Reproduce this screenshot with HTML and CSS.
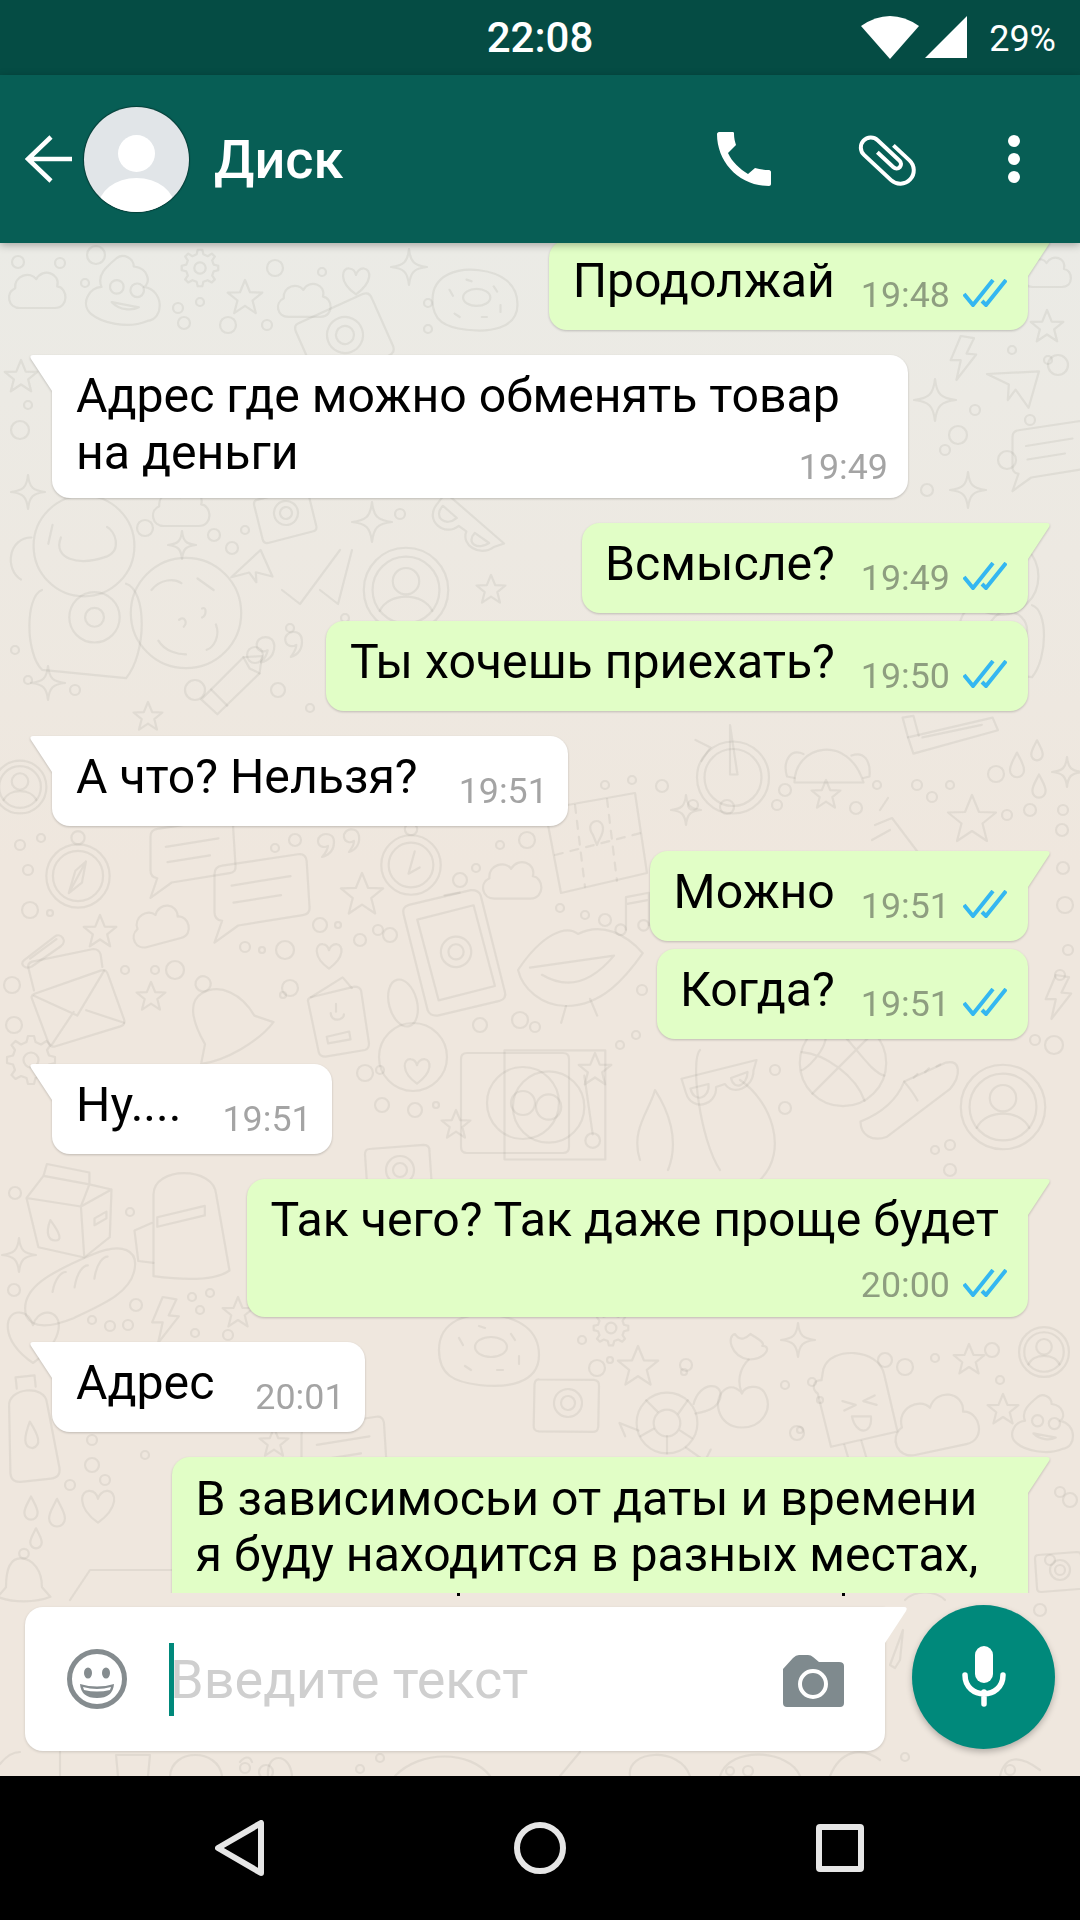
FILE: index.html
```html
<!DOCTYPE html>
<html lang="ru">
<head>
  <meta charset="UTF-8">
  <title>Диск</title>
  <meta name="viewport" content="width=device-width, initial-scale=1.0">
  <link rel="stylesheet" href="styles.css">
</head>
<body>
  <div class="phone">
    <!-- Status bar -->
    <div class="status-bar">
      <span></span>
      <span class="clock">22:08</span>
      <div class="status-right">
        <svg class="wifi" width="58" height="43" viewBox="0 0 58 43"><path d="M29 43L0 10Q29 -10 58 10Z"/></svg>
        <svg class="signal" width="42" height="42" viewBox="0 0 42 42"><path d="M0 42L42 0V42Z"/></svg>
        <span class="battery">29%</span>
      </div>
    </div>

    <!-- Header -->
    <header class="app-bar">
      <svg class="back" width="47" height="48" viewBox="0 0 47 48"><path d="M47 24H3M26 2L3 24L26 46"/></svg>
      <div class="avatar">
        <span class="avatar-head"></span>
        <span class="avatar-body"></span>
      </div>
      <h1 class="contact">Диск</h1>
      <div class="actions">
        <svg width="54" height="54" viewBox="0 0 54 54"><path d="M2 0H16C17 0 17 1 17 2C17 6 18 10 19 13L11 21C15 30 23 37 31 42L38 36C42 37 47 38 52 38C53 38 54 39 54 40V52C54 53 53 54 52 54C22 54 0 30 0 2C0 1 1 0 2 0Z"/></svg>
        <svg class="clip" width="61" height="56" viewBox="-30.5 -28 61 56"><g transform="rotate(43)"><path d="M-5 -14H17A13.5 13.5 0 0 1 17 13H-20A10 10 0 0 1 -20 -7H10A4.5 4.5 0 0 1 10 2H-12"/></g></svg>
        <div class="dots"><i></i><i></i><i></i></div>
      </div>
    </header>

    <main class="chat">
      <!-- Wallpaper doodles -->
      <svg class="wallpaper" width="1080" height="1533" viewBox="0 243 1080 1533">
        <defs>
          <path id="star" d="M0-50L14-16L48-15L21 7L30 42L0 22L-30 42L-21 7L-48-15L-14-16Z"/>
          <path id="sparkle" d="M0-50C4-14 14-4 50 0C14 4 4 14 0 50C-4 14-14 4-50 0C-14-4-4-14 0-50Z"/>
          <path id="cloud" d="M-30 30C-50 30-55 5-38-3C-40-25-12-32-3-18C8-38 38-28 32-6C50-4 52 30 28 30Z"/>
          <path id="heart" d="M0 40C-50 5-40-35-18-32C-8-31-2-22 0-14C2-22 10-33 22-32C42-30 48 5 0 40Z"/>
          <path id="drop" d="M0-45C12-20 22-8 22 10A22 22 0 0 1-22 10C-22-8-12-20 0-45Z"/>
          <path id="bolt" d="M-5-50L25-45L8-10L30-8L-15 50L-5 5L-28 5Z"/>
          <path id="plane" d="M-50-25L50-30L30 40L5 5L-10 25L-8-5Z"/>
          <g id="gear"><circle r="15"/><path d="M-9-36L-6-48H6L9-36L20-31L31-38L39-30L32-20L36-9L48-6V6L36 9L32 20L39 30L31 38L20 32L9 36L6 48H-6L-9 36L-20 32L-31 38L-39 30L-32 20L-36 9L-48 6V-6L-36-9L-32-20L-39-30L-31-38L-20-31Z"/></g>
          <g id="chat"><path d="M-50-24Q-50-32-42-33L38-45Q46-46 47-38L50 10Q51 18 43 19L-25 30L-50 48L-42 25Q-50 24-50 16Z"/><path d="M-32-12L30-22M-30 6L20-2"/></g>
          <g id="person"><circle r="48"/><circle r="38"/><circle cy="-10" r="15"/><path d="M-30 24C-20 2 20 2 30 24"/></g>
          <g id="donut"><path d="M-50 0C-50-30-20-38 5-35C30-32 50-20 50 5C50 35 15 38-10 35C-35 32-50 25-50 0Z"/><ellipse cx="2" cy="-3" rx="16" ry="10"/><path d="M-30-12L-26-5M-10-24L-4-22M22-16L26-10M30 6L30 14M-24 16L-18 20M8 20L14 20"/></g>
          <g id="clock"><circle r="48"/><circle r="36"/><path d="M6-22L-4 14L14 4"/><circle cy="-58" r="10"/></g>
          <g id="compass"><circle r="48"/><circle r="38"/><path d="M12-22L-14 26L-4-8ZM-4-8L-14 26L6 10L12-22"/><circle cy="-58" r="10"/></g>
          <g id="envelope"><path d="M-50-10L24-36Q30-38 32-32L50 18Q52 24 46 26L-26 48Q-32 50-34 44L-52-4Q-54-8-50-10Z"/><path d="M-50-8L-2 14L28-36M-30 46L-6 10M8 8L50 22"/><path d="M-50-14L-56-38Q-58-44-52-46L16-60Q22-60 24-54L26-40"/></g>
          <g id="phone"><path d="M-46-50L20-62Q28-62 30-56L50 46Q52 54 44 56L-22 68Q-30 68-32 62L-52-40Q-54-48-46-50Z"/><path d="M-38-34L22-46L40 40L-20 52Z"/><circle cx="1" cy="2" r="16"/><circle cx="1" cy="2" r="8"/><path d="M-8-58L8-60"/></g>
          <g id="passport"><path d="M-38-30L28-46Q36-46 38-40L50 40Q50 48 44 50L-16 60Q-24 60-26 54L-42-22Q-44-28-38-30Z"/><path d="M-38-30L10-60L24-44M-14 30L20 22L22 34L-12 40ZM-8-6C-8 8 12 6 12-4M0-20V-8"/></g>
          <g id="milk"><path d="M-50-20L14-10L18 50L-36 38ZM14-10L50-30L48 26L18 50M-50-20L-30-46L24-36L14-10M-30-46L-26-60L24-50L24-36L50-30"/><path d="M-22 6C-10 22 -8 30-16 30C-24 30-28 22-22 6"/><path d="M30 4L44-4L44 4L30 12Z"/></g>
          <g id="pack"><path d="M-30-30C-30-60 34-60 36-30L50 50Q30 64-30 56Z"/><path d="M-32 0L-50 8L-46 40L-30 42M-26-6L24-18V-8L-26 4Z"/></g>
          <g id="bread"><path d="M-48 30C-55 5-25-10 10-25C40-38 55-30 50-10C45 10 20 20-5 32C-25 40-42 42-48 30Z"/><path d="M-24 8C-22-4-16-10-12-10M-4 4C-2-10 4-16 8-16M14-4C16-18 22-24 26-24"/></g>
          <g id="glasses"><path d="M-50-15L50-40L46-26C46-2 18 8 8-8L-4-4C-2 20-36 30-44 4Z"/><path d="M-38-2L-14-8C-12 12-34 18-38-2ZM16-16L38-24C38-6 20 2 16-16Z"/></g>
          <g id="ball"><circle r="48"/><path d="M-46-12C-20-10 14 14 24 42M-14-46C14-20 30 10 46 14M-34 34L34-34M-24-42C-8-26-36 4-46 8"/></g>
          <g id="shoe"><path d="M-50 30C-30 22-12 8-4-12L40-32C56-36 56-18 44-4L-22 46C-38 52-50 44-50 30Z"/><path d="M-4-12C4-2 6 0 10 8M6-16L10-20M18-22L22-26M30-28L34-30"/></g>
          <g id="map"><path d="M-50-34L40-50L52 30L-34 50Z"/><path d="M-40 12L46-10M-20-38L-10 44M12-44L22 38" stroke-dasharray="8 8"/><path d="M-2-8C-12-22 8-28 8-14C8-8 4-4 2 2Z"/></g>
          <g id="taco"><path d="M-46 30C-46-20 26-36 46 30Z"/><path d="M-34-8C-52-16-62 2-56 22L-46 24M30-6C46-12 56 0 54 22L46 24"/></g>
          <g id="wheel"><circle cy="10" r="48"/><circle cy="10" r="38"/><path d="M-4-60L6 6L-4 6ZM-50-40L-30-30L-42-12"/></g>
          <g id="ruler"><path d="M-50-14L44-36L50-22L-44 4Z"/><path d="M-34-14L32-28M-50-14L-56-36L-44-38L-38-16"/></g>
          <g id="turtle"><circle r="32"/><circle r="14"/><path d="M-10-12L-22-24M12-10L22-24M-14 6L-28 14M14 8L26 16M0 14V32M28-20C34-44 60-44 56-26C52-14 40-12 30-10M-30 8L-50 0L-44 14M20 26L40 40L46 28"/></g>
          <g id="plant"><path d="M-6 50C-36 50-42 14-24 4C-16 0-8 6-6 10C-2 0 14 0 20 8C32 28 18 50-6 50ZM-6 10C-14-10-4-24 2-30"/><path d="M2-30C-20-34-24-58-14-60C-8-50 0-56 4-60C10-56 22-50 18-46C30-46 22-30 2-30Z"/></g>
          <g id="ice"><path d="M-28-36C-20-60 30-58 36-30L50 30L-20 46L-34-10C-40-14-40-24-30-24Z"/><path d="M-6 44L0 64M12 40L18 60M-8-2L6 2L-6 8M26-8L14-2L28 2M2 14H22C24 34 6 34 2 14Z"/></g>
          <g id="lips"><path d="M-50 0C-30-30-10-38 0-30C20-40 40-30 54-14C40 6 20 30-10 30C-30 30-46 16-50 0Z"/><path d="M-40-2L30-12M-30 4C-10 16 10 12 30-12M-10 30L-14 44M10 24L16 38"/></g>
          <g id="astro"><circle cy="-42" r="48"/><path d="M-22-50C-30-30-6-22 22-32C36-38 30-56 22-60M-30-62L-34-44"/><path d="M-50-50C-72-50-76-20-60-10M-40 0C-56 6-56 60-40 76L40 84C60 60 60 0 40-6"/><circle cx="10" cy="26" r="24"/><circle cx="10" cy="26" r="9"/></g>
          <g id="cookie"><circle r="48"/><path d="M-30-20C-22-30-10-30-4-26M10-30L24-20M-24 24C-18 34-6 36 0 36M26 10C30 20 24 30 18 32M-6 6C-2 2 2 8-2 12M14-4C18-6 18 2 14 4"/></g>
          <g id="pencil"><path d="M-48 20L20-48L50-50L46-22L-22 44Z"/><path d="M20-48L30-30L46-22M-32 4L-6 30"/></g>
          <g id="quote"><path d="M-14-2C-14-24-46-22-46-4C-46 8-34 10-26 6C-28 16-32 22-38 28C-24 24-14 14-14-2ZM36-14C34-34 4-30 6-12C8 0 20 0 26-4C26 6 20 12 16 18C30 14 38 2 36-14Z"/></g>
          <g id="photo"><path d="M-44-30L34-36Q42-36 42-28L46 30Q46 38 38 38L-38 44Q-46 44-46 36L-50-22Q-50-30-44-30Z"/><circle r="20"/><circle r="10"/></g>
          <g id="clipdoodle"><path d="M-48 28L22-26C36-36 52-16 36-4L-30 42C-46 50-58 36-48 28ZM-34 24L26-20"/></g>
          <g id="note"><path d="M-16 38V-36L36-46V28M-16-20L36-30"/><circle cx="-28" cy="38" r="12"/><circle cx="24" cy="28" r="12"/></g>
          <g id="vinyl"><path d="M-50-50H46Q52-50 52-44V44Q52 50 46 50H-50Q-56 50-56 44V-44Q-56-50-50-50Z"/><circle cx="6" r="36"/><circle cx="6" r="12"/></g>
          <g id="poop"><path d="M-12-40C-4-46 8-40 8-30C26-28 28-10 20-6C44-2 44 32 24 34C0 44-30 36-42 26C-56 14-44-6-30-6C-36-20-24-30-12-40Z"/><circle cx="-12" cy="-6" r="8"/><circle cx="12" cy="-2" r="8"/><path d="M-18 12C-8 22 6 22 14 18Z"/></g>
          <g id="bell"><path d="M-6-36C16-36 30-14 30 12L44 28C20 38-20 38-44 28L-30 12C-30-14-24-36-6-36Z"/><circle cy="-44" r="8"/></g>
          <g id="bottle"><path d="M-20-30C-20-50 20-50 20-30L26 40Q26 50 16 50H-16Q-26 50-26 40ZM-10-48V-60H10V-48"/><path d="M0-12C8 4 10 14 0 16C-10 14-8 4 0-12Z"/></g>
          <g id="turntable"><path d="M-50-54H46V50H-50Z"/><circle cx="-8" r="34"/><circle cx="-8" r="12"/><path d="M26-30L34 26"/><circle cx="34" cy="32" r="7"/></g>
        </defs>

        <use href="#cloud" transform="translate(38 290) scale(.6)"/>
        <use href="#poop" transform="translate(127 292) scale(.85)"/>
        <use href="#gear" transform="translate(200 268) scale(.38)"/>
        <use href="#star" transform="translate(245 298) scale(.36)"/>
        <use href="#cloud" transform="translate(305 300) scale(.56)"/>
        <use href="#heart" transform="translate(356 280) scale(.36)"/>
        <use href="#sparkle" transform="translate(409 267) scale(.36)"/>
        <use href="#donut" transform="translate(475 300) scale(.85)"/>
        <use href="#photo" transform="translate(345 335) scale(.9) rotate(-20)"/>
        <use href="#sparkle" transform="translate(1000 272) scale(.3)"/>
        <use href="#star" transform="translate(1047 327) scale(.34)"/>
        <use href="#cloud" transform="translate(1048 272) scale(.5)"/>

        <use href="#star" transform="translate(21 377) scale(.34)"/>
        <use href="#sparkle" transform="translate(28 492) scale(.34)"/>
        <use href="#astro" transform="translate(84 590) scale(1.05)"/>
        <use href="#cookie" transform="translate(186 613) scale(1.15)"/>
        <use href="#cloud" transform="translate(182 508) scale(.6)"/>
        <use href="#photo" transform="translate(286 513) scale(.6) rotate(-10)"/>
        <use href="#sparkle" transform="translate(372 522) scale(.4)"/>
        <use href="#sparkle" transform="translate(182 545) scale(.28)"/>
        <use href="#plane" transform="translate(253 572) scale(.4) rotate(-40)"/>
        <path d="M282 590L300 604L340 550M320 590L338 604L352 550"/>
        <use href="#person" transform="translate(406 590) scale(.88)"/>
        <use href="#glasses" transform="translate(458 530) scale(.75) rotate(55)"/>
        <use href="#star" transform="translate(491 590) scale(.3)"/>
        <use href="#bolt" transform="translate(963 358) scale(.44)"/>
        <use href="#plane" transform="translate(1013 387) scale(.52)"/>
        <use href="#sparkle" transform="translate(935 400) scale(.42)"/>
        <use href="#sparkle" transform="translate(968 490) scale(.36)"/>
        <use href="#chat" transform="translate(1050 455) scale(.75)"/>
        <use href="#astro" transform="translate(1000 610) scale(.8)"/>
        <use href="#pencil" transform="translate(231 687) scale(.62)"/>
        <use href="#quote" transform="translate(282 647) scale(.55)"/>
        <use href="#sparkle" transform="translate(48 683) scale(.34)"/>
        <use href="#star" transform="translate(148 717) scale(.3)"/>

        <use href="#person" transform="translate(20 787) scale(.55)"/>
        <use href="#compass" transform="translate(78 876) scale(.66)"/>
        <use href="#chat" transform="translate(193 857) scale(.85)"/>
        <use href="#chat" transform="translate(262 897) scale(.95)"/>
        <use href="#quote" transform="translate(341 843) scale(.5)"/>
        <use href="#clock" transform="translate(411 865) scale(.62)"/>
        <use href="#cloud" transform="translate(513 880) scale(.62)"/>
        <use href="#star" transform="translate(362 895) scale(.44)"/>
        <use href="#star" transform="translate(100 932) scale(.34)"/>
        <use href="#cloud" transform="translate(160 925) scale(.6) rotate(-15)"/>
        <use href="#phone" transform="translate(455 950) scale(.95) rotate(-3)"/>
        <use href="#clipdoodle" transform="translate(45 948) scale(.44)"/>
        <use href="#heart" transform="translate(329 955) scale(.34)"/>
        <use href="#envelope" transform="translate(79 1003) scale(.9)"/>
        <use href="#star" transform="translate(151 997) scale(.3)"/>
        <use href="#bell" transform="translate(224 1020) scale(.95) rotate(-30)"/>
        <use href="#passport" transform="translate(336 1017) scale(.66)"/>
        <ellipse cx="403" cy="1003" rx="14" ry="24" transform="rotate(-15 403 1003)"/>
        <circle cx="413" cy="1057" r="34"/>
        <use href="#heart" transform="translate(417 1070) scale(.34)"/>
        <use href="#vinyl" transform="translate(517 1103) scale(1)"/>
        <use href="#gear" transform="translate(31 1060) scale(.5)"/>
        <use href="#star" transform="translate(456 1125) scale(.3)"/>
        <use href="#photo" transform="translate(400 1170) scale(.7)"/>
        <use href="#wheel" transform="translate(733 770) scale(.75)"/>
        <use href="#taco" transform="translate(829 760) scale(.75)"/>
        <use href="#ruler" transform="translate(953 750) scale(.9)"/>
        <use href="#drop" transform="translate(1017 767) scale(.32)"/>
        <use href="#drop" transform="translate(1037 752) scale(.26)"/>
        <use href="#drop" transform="translate(1039 788) scale(.3)"/>
        <use href="#sparkle" transform="translate(1067 772) scale(.3)"/>
        <use href="#map" transform="translate(595 843) scale(1)"/>
        <use href="#star" transform="translate(826 795) scale(.3)"/>
        <use href="#star" transform="translate(972 820) scale(.5)"/>
        <use href="#sparkle" transform="translate(686 810) scale(.3)"/>
        <path d="M875 825L892 818L920 855M880 810L888 798M890 830L872 840"/>
        <use href="#note" transform="translate(633 913) scale(.44)"/>
        <use href="#lips" transform="translate(578 970) scale(1.2)"/>
        <use href="#bolt" transform="translate(1058 997) scale(.44)"/>
        <use href="#turntable" transform="translate(557 1107) scale(1.05)"/>
        <use href="#star" transform="translate(595 1070) scale(.34)"/>
        <use href="#glasses" transform="translate(719 1090) scale(.75)"/>
        <use href="#ball" transform="translate(843 1063) scale(.9)"/>
        <use href="#shoe" transform="translate(908 1093) scale(.95)"/>
        <use href="#person" transform="translate(1003 1107) scale(.88)"/>
        <path d="M640 1160C630 1130 650 1110 655 1090C668 1110 680 1140 668 1170M720 1170C700 1140 690 1060 700 1050M760 1180C790 1150 770 1100 740 1080"/>

        <use href="#milk" transform="translate(69 1215) scale(.85)"/>
        <use href="#pack" transform="translate(182 1223) scale(.95)"/>
        <use href="#sparkle" transform="translate(19 1255) scale(.34)"/>
        <use href="#bread" transform="translate(79 1283) scale(1.1)"/>
        <use href="#bolt" transform="translate(165 1320) scale(.46)"/>
        <use href="#star" transform="translate(238 1313) scale(.32)"/>
        <use href="#heart" transform="translate(33 1335) scale(.7)"/>
        <use href="#bottle" transform="translate(31 1433) scale(.95) rotate(-6)"/>
        <use href="#heart" transform="translate(98 1505) scale(.44)"/>
        <use href="#drop" transform="translate(31 1510) scale(.3)"/>
        <use href="#drop" transform="translate(57 1515) scale(.36)"/>
        <use href="#drop" transform="translate(36 1540) scale(.26)"/>
        <use href="#bell" transform="translate(24 1580) scale(.6)"/>
        <path d="M70 1600L90 1570H250"/>
        <use href="#star" transform="translate(274 1443) scale(.3)"/>
        <use href="#chat" transform="translate(344 1455) scale(.85)"/>
        <use href="#donut" transform="translate(489 1350) scale(1)"/>
        <use href="#gear" transform="translate(611 1328) scale(.36)"/>
        <use href="#star" transform="translate(638 1367) scale(.42)"/>
        <use href="#plant" transform="translate(747 1385) scale(.85)"/>
        <use href="#sparkle" transform="translate(798 1340) scale(.34)"/>
        <use href="#ice" transform="translate(850 1403) scale(.95)"/>
        <use href="#photo" transform="translate(568 1403) scale(.7) rotate(5)"/>
        <use href="#turtle" transform="translate(667 1423) scale(.95)"/>
        <use href="#person" transform="translate(1044 1352) scale(.52)"/>
        <use href="#cloud" transform="translate(936 1423) scale(.9) rotate(-12)"/>
        <use href="#star" transform="translate(1003 1410) scale(.32)"/>
        <use href="#poop" transform="translate(1046 1425) scale(.7)"/>
        <use href="#star" transform="translate(969 1360) scale(.32)"/>
        <use href="#photo" transform="translate(1060 1570) scale(.5)"/>

        <!-- scattered dots -->
        <circle cx="18" cy="262" r="6"/><circle cx="60" cy="263" r="5"/><circle cx="96" cy="255" r="9"/><circle cx="85" cy="283" r="4"/><circle cx="178" cy="308" r="5"/><circle cx="200" cy="302" r="4"/><circle cx="184" cy="323" r="6"/><circle cx="228" cy="325" r="8"/><circle cx="267" cy="325" r="5"/><circle cx="275" cy="268" r="8"/><circle cx="322" cy="272" r="4"/><circle cx="428" cy="303" r="4"/><circle cx="428" cy="329" r="4"/>
        <circle cx="20" cy="430" r="9"/><circle cx="28" cy="405" r="4"/><circle cx="145" cy="528" r="8"/><circle cx="214" cy="535" r="6"/><circle cx="232" cy="548" r="6"/><circle cx="245" cy="530" r="4"/><circle cx="290" cy="628" r="4"/><circle cx="345" cy="618" r="4"/><circle cx="255" cy="655" r="8"/><circle cx="195" cy="690" r="10"/><circle cx="278" cy="690" r="7"/><circle cx="310" cy="708" r="4"/><circle cx="75" cy="690" r="5"/><circle cx="28" cy="680" r="4"/><circle cx="15" cy="650" r="4"/><circle cx="400" cy="514" r="5"/><circle cx="927" cy="490" r="6"/><circle cx="945" cy="450" r="5"/><circle cx="958" cy="435" r="9"/><circle cx="975" cy="410" r="5"/><circle cx="1007" cy="460" r="9"/><circle cx="1030" cy="420" r="5"/><circle cx="1058" cy="365" r="10"/><circle cx="1012" cy="350" r="4"/><circle cx="1048" cy="360" r="4"/>
        <circle cx="20" cy="845" r="5"/><circle cx="41" cy="838" r="4"/><circle cx="28" cy="870" r="5"/><circle cx="30" cy="910" r="8"/><circle cx="50" cy="913" r="3"/><circle cx="275" cy="848" r="4"/><circle cx="295" cy="840" r="6"/><circle cx="500" cy="845" r="4"/><circle cx="527" cy="840" r="8"/><circle cx="460" cy="880" r="7"/><circle cx="476" cy="868" r="4"/><circle cx="320" cy="925" r="7"/><circle cx="338" cy="925" r="3"/><circle cx="360" cy="940" r="6"/><circle cx="378" cy="930" r="5"/><circle cx="390" cy="935" r="7"/><circle cx="285" cy="950" r="9"/><circle cx="245" cy="947" r="5"/><circle cx="262" cy="950" r="3"/><circle cx="175" cy="970" r="9"/><circle cx="155" cy="970" r="4"/><circle cx="125" cy="970" r="4"/><circle cx="12" cy="985" r="8"/><circle cx="14" cy="1025" r="8"/><circle cx="290" cy="988" r="8"/><circle cx="283" cy="995" r="3"/><circle cx="520" cy="1020" r="8"/><circle cx="535" cy="1027" r="5"/><circle cx="480" cy="1025" r="7"/><circle cx="380" cy="1070" r="4"/><circle cx="365" cy="1073" r="8"/><circle cx="415" cy="1110" r="7"/><circle cx="436" cy="1105" r="3"/><circle cx="382" cy="1105" r="7"/>
        <circle cx="605" cy="785" r="4"/><circle cx="632" cy="780" r="4"/><circle cx="662" cy="786" r="6"/><circle cx="693" cy="805" r="5"/><circle cx="727" cy="807" r="7"/><circle cx="785" cy="790" r="6"/><circle cx="777" cy="805" r="5"/><circle cx="856" cy="808" r="6"/><circle cx="877" cy="785" r="4"/><circle cx="917" cy="785" r="5"/><circle cx="932" cy="797" r="5"/><circle cx="950" cy="785" r="4"/><circle cx="996" cy="774" r="8"/><circle cx="1007" cy="815" r="5"/><circle cx="1030" cy="810" r="6"/><circle cx="1063" cy="810" r="5"/><circle cx="1062" cy="830" r="6"/><circle cx="1063" cy="868" r="6"/><circle cx="1065" cy="905" r="8"/><circle cx="1068" cy="950" r="5"/><circle cx="1060" cy="975" r="5"/><circle cx="1054" cy="1045" r="9"/><circle cx="560" cy="908" r="4"/><circle cx="585" cy="915" r="4"/><circle cx="605" cy="920" r="6"/><circle cx="642" cy="990" r="5"/><circle cx="620" cy="1045" r="4"/><circle cx="636" cy="1035" r="4"/><circle cx="775" cy="1070" r="5"/><circle cx="785" cy="1108" r="6"/><circle cx="1035" cy="1040" r="5"/><circle cx="935" cy="1150" r="4"/><circle cx="950" cy="1145" r="5"/><circle cx="950" cy="1170" r="6"/>
        <circle cx="15" cy="1193" r="6"/><circle cx="14" cy="1290" r="6"/><circle cx="130" cy="1212" r="4"/><circle cx="136" cy="1305" r="6"/><circle cx="192" cy="1297" r="4"/><circle cx="210" cy="1293" r="4"/><circle cx="200" cy="1310" r="4"/><circle cx="92" cy="1320" r="4"/><circle cx="110" cy="1326" r="5"/><circle cx="128" cy="1325" r="5"/><circle cx="195" cy="1333" r="4"/><circle cx="228" cy="1335" r="5"/><circle cx="92" cy="1440" r="5"/><circle cx="92" cy="1465" r="7"/><circle cx="70" cy="1485" r="5"/><circle cx="105" cy="1480" r="5"/><circle cx="145" cy="1455" r="4"/>
        <circle cx="582" cy="1340" r="4"/><circle cx="597" cy="1368" r="8"/><circle cx="610" cy="1360" r="3"/><circle cx="686" cy="1365" r="6"/><circle cx="684" cy="1372" r="3"/><circle cx="785" cy="1385" r="4"/><circle cx="812" cy="1382" r="4"/><circle cx="820" cy="1400" r="3"/><circle cx="800" cy="1430" r="3"/><circle cx="797" cy="1433" r="7"/><circle cx="885" cy="1360" r="7"/><circle cx="905" cy="1367" r="8"/><circle cx="935" cy="1358" r="4"/><circle cx="1000" cy="1380" r="4"/><circle cx="992" cy="1350" r="7"/><circle cx="1060" cy="1492" r="5"/><circle cx="1070" cy="1500" r="7"/><circle cx="1050" cy="1560" r="5"/><circle cx="1040" cy="1610" r="6"/>

        <!-- strip under the input -->
        <path d="M0 1764C8 1754 14 1752 20 1752M60 1776V1752M118 1776L116 1755H150L148 1776M170 1776C172 1748 218 1748 222 1776M240 1762C245 1756 250 1756 252 1762M268 1776C266 1752 290 1752 292 1776M395 1776C420 1750 470 1750 490 1776M560 1776L580 1752M630 1776C626 1750 680 1746 690 1776M720 1776C730 1745 790 1750 800 1776M830 1776C840 1752 860 1745 880 1760M1000 1776C1005 1755 1020 1755 1040 1770"/>
        <circle cx="245" cy="1768" r="5"/><circle cx="266" cy="1772" r="7"/><circle cx="360" cy="1769" r="4"/><circle cx="730" cy="1771" r="4"/><circle cx="748" cy="1771" r="5"/><circle cx="905" cy="1757" r="4"/><circle cx="1010" cy="1770" r="5"/><circle cx="380" cy="1758" r="4"/>
        <path d="M903 1630L900 1660L895 1668L890 1665ZM905 1600C915 1590 935 1590 945 1600"/>
      </svg>

      <div class="messages">
        <div class="msg out tail first">
          <span class="text">Продолжай</span>
          <span class="meta"><span class="time">19:48</span><svg class="ticks" width="44" height="28" viewBox="0 0 44 28"><path d="M1 15L10 26L30 1M19 22L23 26L43 1"/></svg></span>
        </div>
        <div class="msg in tail stack two-lines wide">
          <span class="text">Адрес где можно обменять товар<br>на деньги</span>
          <span class="meta"><span class="time">19:49</span></span>
        </div>
        <div class="msg out tail">
          <span class="text">Всмысле?</span>
          <span class="meta"><span class="time">19:49</span><svg class="ticks" width="44" height="28" viewBox="0 0 44 28"><path d="M1 15L10 26L30 1M19 22L23 26L43 1"/></svg></span>
        </div>
        <div class="msg out">
          <span class="text">Ты хочешь приехать?</span>
          <span class="meta"><span class="time">19:50</span><svg class="ticks" width="44" height="28" viewBox="0 0 44 28"><path d="M1 15L10 26L30 1M19 22L23 26L43 1"/></svg></span>
        </div>
        <div class="msg in tail">
          <span class="text">А что? Нельзя?</span>
          <span class="meta"><span class="time">19:51</span></span>
        </div>
        <div class="msg out tail">
          <span class="text">Можно</span>
          <span class="meta"><span class="time">19:51</span><svg class="ticks" width="44" height="28" viewBox="0 0 44 28"><path d="M1 15L10 26L30 1M19 22L23 26L43 1"/></svg></span>
        </div>
        <div class="msg out">
          <span class="text">Когда?</span>
          <span class="meta"><span class="time">19:51</span><svg class="ticks" width="44" height="28" viewBox="0 0 44 28"><path d="M1 15L10 26L30 1M19 22L23 26L43 1"/></svg></span>
        </div>
        <div class="msg in tail">
          <span class="text">Ну....</span>
          <span class="meta"><span class="time">19:51</span></span>
        </div>
        <div class="msg out tail stack mid">
          <span class="text">Так чего? Так даже проще будет</span>
          <span class="meta"><span class="time">20:00</span><svg class="ticks" width="44" height="28" viewBox="0 0 44 28"><path d="M1 15L10 26L30 1M19 22L23 26L43 1"/></svg></span>
        </div>
        <div class="msg in tail">
          <span class="text">Адрес</span>
          <span class="meta"><span class="time">20:01</span></span>
        </div>
        <div class="msg out tail stack long wide">
          <span class="text">В зависимосьи от даты и времени<br>я буду находится в разных местах,</span>
        </div>
      </div>

      <!-- Input row -->
      <div class="composer-row">
        <!-- tops of the next, cut off line of text -->
        <i class="cut-mark left"></i>
        <i class="cut-mark right"></i>
        <div class="composer">
          <svg class="smile" width="60" height="60" viewBox="0 0 60 60">
            <circle cx="30" cy="30" r="27.5" fill="none" stroke="#858c8f" stroke-width="5"/>
            <ellipse cx="21" cy="24" rx="4" ry="5.5" fill="#858c8f"/>
            <ellipse cx="39" cy="24" rx="4" ry="5.5" fill="#858c8f"/>
            <path d="M13 35Q30 40 47 35Q46 49 30 49Q14 49 13 35Z" fill="#858c8f"/>
            <path d="M16 38Q30 42 44 38L43 41Q30 44 17 41Z" fill="#fff"/>
          </svg>
          <span class="caret"></span>
          <span class="placeholder">Введите текст</span>
          <svg class="camera" width="61" height="52" viewBox="0 0 61 52">
            <path d="M0 14L10 3Q13 0 16 0H25Q28 0 30 2L36 7H56Q61 7 61 11V48Q61 52 57 52H4Q0 52 0 48Z" fill="#7f8a8e"/>
            <circle cx="30" cy="29" r="13" fill="none" stroke="#fff" stroke-width="4"/>
          </svg>
        </div>
        <div class="fab">
          <svg width="44" height="62" viewBox="0 0 44 62">
            <rect x="13" y="0" width="18" height="37" rx="9" fill="#fff"/>
            <path d="M3 29C3 54 41 54 41 29M22 46V58" fill="none" stroke="#fff" stroke-width="5.5" stroke-linecap="round"/>
          </svg>
        </div>
      </div>
    </main>

    <!-- Navigation bar -->
    <nav class="nav-bar">
      <svg width="49" height="56" viewBox="0 0 49 56"><path d="M46 3V53L3 28Z"/></svg>
      <svg width="52" height="52" viewBox="0 0 52 52"><circle cx="26" cy="26" r="23"/></svg>
      <svg width="48" height="48" viewBox="0 0 48 48"><rect x="3" y="3" width="42" height="42" rx="1"/></svg>
    </nav>
  </div>
</body>
</html>
```

FILE: styles.css
```css
/* Colours taken from the screenshot */
:root {
  --status: #054c44;
  --bar: #075e55;
  --accent: #00897b;
  --out: #e1fec6;
  --in: #ffffff;
  --tick: #34b7f1;
}

* {
  margin: 0;
  padding: 0;
  box-sizing: border-box;
}

body {
  background: #000;
  font-family: Roboto, "Noto Sans", sans-serif;
  color: #000;
}

.phone {
  width: 1080px;
  height: 1920px;
  display: flex;
  flex-direction: column;
  overflow: hidden;
}

/* Status bar */
.status-bar {
  flex: 0 0 75px;
  background: var(--status);
  color: #fff;
  display: grid;
  grid-template-columns: 1fr auto 1fr;
  align-items: center;
}
.clock {
  font-size: 42px;
  font-weight: 500;
  margin-top: -1px;
}
.status-right {
  display: flex;
  align-items: flex-start;
  justify-content: flex-end;
  padding-right: 24px;
  height: 75px;
}
.status-right svg {
  fill: #fff;
  margin-top: 16px;
}
.signal {
  margin-left: 6px;
}
.battery {
  font-size: 36px;
  margin-left: 22px;
  line-height: 78px;
}

/* Top bar */
.app-bar {
  flex: 0 0 168px;
  background: var(--bar);
  color: #fff;
  display: flex;
  align-items: center;
  padding-left: 25px;
  position: relative;
  z-index: 2;
  box-shadow: 0 2px 8px rgba(0, 0, 0, 0.3);
}
.back {
  fill: none;
  stroke: #fff;
  stroke-width: 4.5;
}
.avatar {
  position: relative;
  width: 105px;
  height: 105px;
  margin-left: 12px;
  border-radius: 50%;
  overflow: hidden;
  background: #e1e5e8;
  box-shadow: 0 0 1px 1px rgba(0, 0, 0, 0.35);
  flex-shrink: 0;
}
.avatar-head {
  position: absolute;
  left: 34px;
  top: 28px;
  width: 37px;
  height: 37px;
  border-radius: 50%;
  background: #fff;
}
.avatar-body {
  position: absolute;
  left: 14px;
  top: 71px;
  width: 77px;
  height: 60px;
  border-radius: 50%;
  background: #fff;
}
.contact {
  font-size: 54px;
  font-weight: 500;
  margin-left: 25px;
}
.actions {
  display: flex;
  align-items: center;
  margin-left: auto;
  padding-right: 60px;
  fill: #fff;
}
.clip {
  margin-left: 86px;
  fill: none;
  stroke: #fff;
  stroke-width: 4;
  overflow: visible;
}
.dots {
  margin-left: 90px;
  display: flex;
  flex-direction: column;
  gap: 6px;
}
.dots i {
  display: block;
  width: 12px;
  height: 12px;
  border-radius: 50%;
  background: #fff;
}

/* Chat area */
.chat {
  flex: 0 0 1533px;
  position: relative;
  background: linear-gradient(#ebebe6 0, #efe7de 620px);
  display: flex;
  flex-direction: column;
}
.wallpaper {
  position: absolute;
  left: 0;
  top: 0;
  fill: none;
  stroke: rgba(110, 110, 95, 0.1);
  stroke-width: 2.2;
  stroke-linejoin: round;
  stroke-linecap: round;
}
.wallpaper defs * {
  vector-effect: non-scaling-stroke;
}

.messages {
  flex: 0 0 1350px;
  position: relative;
  overflow: hidden;
  display: flex;
  flex-direction: column;
}

.msg {
  position: relative;
  flex-shrink: 0;
  display: flex;
  height: 90px;
  margin-top: 8px;
  border-radius: 18px;
  filter: drop-shadow(0 1.5px 1px rgba(0, 0, 0, 0.2));
}
.msg.tail {
  margin-top: 25px;
}
.msg.first {
  margin-top: -3px;
}
.msg.out {
  align-self: flex-end;
  margin-right: 52px;
  background: var(--out);
  padding: 0 21px 0 23.5px;
}
.msg.in {
  align-self: flex-start;
  margin-left: 52px;
  background: var(--in);
  padding: 0 20px 0 24px;
}
.msg.out.tail {
  border-top-right-radius: 0;
}
.msg.in.tail {
  border-top-left-radius: 0;
}
.msg.tail::after {
  content: "";
  position: absolute;
  top: 0;
  width: 22px;
  height: 36px;
  background: inherit;
}
.msg.out.tail::after {
  left: 100%;
  clip-path: path("M0 0H19Q23 0 21 4L0 36Z");
}
.msg.in.tail::after {
  right: 100%;
  clip-path: path("M22 0H3Q-1 0 1 4L22 36Z");
}

.text {
  font-size: 48.2px;
  line-height: 56px;
  padding-top: 13px;
  white-space: nowrap;
}
.meta {
  display: flex;
  align-items: flex-start;
  margin-left: 26px;
  padding-top: 35px;
}
.in .meta {
  margin-left: 41px;
}
.time {
  font-size: 35.8px;
  line-height: 40px;
}
.out .time {
  color: #8e9e80;
}
.in .time {
  color: #a4a4a4;
}
.ticks {
  margin-left: 13px;
  margin-top: 4px;
  fill: none;
  stroke: var(--tick);
  stroke-width: 4;
}

/* Bubbles where the time sits under the text */
.msg.stack {
  flex-direction: column;
  height: 138px;
}
.stack .meta {
  align-self: flex-end;
  margin-left: 0;
  padding-top: 17px;
}
.msg.wide {
  width: 856px;
}
.msg.mid {
  width: 781px;
}
.msg.two-lines {
  height: 143px;
}
.two-lines .text {
  padding-top: 12px;
  line-height: 57px;
}
.two-lines .meta {
  padding-top: 0;
  margin-top: -34px;
}
.msg.long {
  height: 160px;
}
.long .text {
  padding-top: 14px;
}

/* Input row */
.composer-row {
  position: relative;
  display: flex;
  align-items: flex-start;
  padding: 14px 0 0 25px;
}
.cut-mark {
  position: absolute;
  top: 0;
  width: 3px;
  height: 3px;
  background: #000;
}
.cut-mark.left {
  left: 457px;
}
.cut-mark.right {
  left: 842px;
}
.composer {
  position: relative;
  width: 860px;
  height: 144px;
  background: #fff;
  border-radius: 18px 0 18px 18px;
  display: flex;
  align-items: center;
  padding-left: 42px;
  box-shadow: 0 1px 3px rgba(0, 0, 0, 0.15);
}
.composer::after {
  content: "";
  position: absolute;
  left: 100%;
  top: 0;
  width: 22px;
  height: 36px;
  background: #fff;
  clip-path: path("M0 0H19Q23 0 21 4L0 36Z");
}
.caret {
  width: 5px;
  height: 73px;
  background: var(--accent);
  margin-left: 42px;
  flex-shrink: 0;
}
.placeholder {
  font-size: 54px;
  color: #cfcfcf;
  margin-left: -4px;
}
.camera {
  margin-left: auto;
  margin-right: 41px;
  margin-top: 4px;
}
.fab {
  width: 143px;
  height: 144px;
  margin-left: 27px;
  margin-top: -2px;
  border-radius: 50%;
  background: var(--accent);
  display: flex;
  align-items: center;
  justify-content: center;
  box-shadow: 0 3px 6px rgba(0, 0, 0, 0.25);
}

/* Navigation bar */
.nav-bar {
  flex: 1;
  background: #000;
  display: grid;
  grid-template-columns: 49px 52px 48px;
  justify-content: start;
  align-items: center;
  padding-left: 215px;
  column-gap: 250px;
}
.nav-bar svg {
  fill: none;
  stroke: #e6e6e6;
  stroke-width: 6;
  stroke-linejoin: round;
}
```
